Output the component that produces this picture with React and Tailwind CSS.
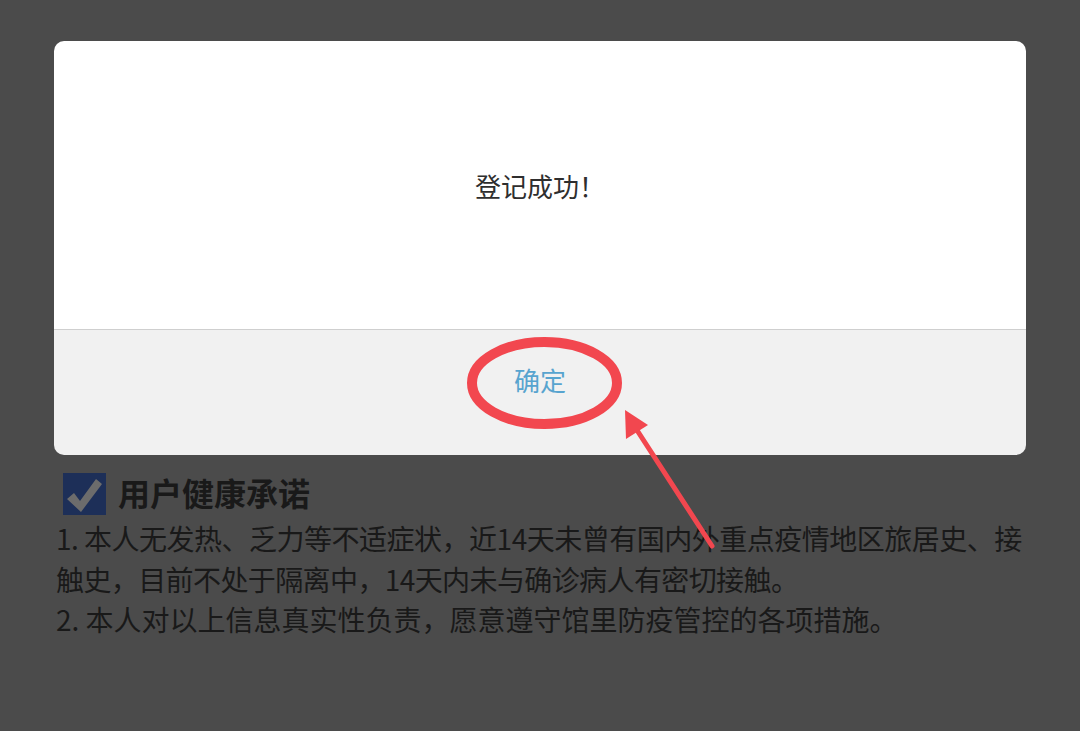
import React from 'react';

const CJK = { fontFamily: '"Noto Sans CJK SC", "Noto Sans", sans-serif' };

function CheckIcon() {
  return (
    <div className="w-[43px] h-[42px] bg-[#1d2f58] flex items-center justify-center">
      <svg viewBox="0 0 43 42" className="w-[43px] h-[42px]">
        <path d="M4 26 L11 20 L17 28 L33 6 L39 11 L18 39 Z" fill="#6c6c6c" />
      </svg>
    </div>
  );
}

export default function App() {
  return (
    <div className="relative w-[1080px] h-[731px] overflow-hidden bg-[#4b4b4b]" style={CJK}>
      {/* page content behind the dim layer */}
      <div className="pt-[473px] pl-[56px] text-[#191919]">
        <div className="flex items-center gap-[12px] pl-[7px]">
          <CheckIcon />
          <h2 className="text-[32px] font-bold leading-none -mt-[4px]">用户健康承诺</h2>
        </div>
        <div className="mt-[3px] text-[28px] leading-[40.5px] whitespace-nowrap">
          <div className="tracking-[-0.5px]">1. 本人无发热、乏力等不适症状，近14天未曾有国内外重点疫情地区旅居史、接</div>
          <div className="tracking-[-0.6px]">触史，目前不处于隔离中，14天内未与确诊病人有密切接触。</div>
          <div>2. 本人对以上信息真实性负责，愿意遵守馆里防疫管控的各项措施。</div>
        </div>
      </div>

      {/* dialog */}
      <div className="absolute left-[54px] top-[41px] w-[972px] rounded-[10px] overflow-hidden">
        <div className="h-[288px] bg-white flex items-center justify-center">
          <p className="text-[26px] text-[#2e2e2e]">登记成功！</p>
        </div>
        <div className="h-[1px] bg-[#cfcfcf]"></div>
        <div className="h-[125px] bg-[#f1f1f1] flex justify-center pt-[35px]">
          <button className="text-[26px] leading-[30px] h-[30px] text-[#58a4cf]">确定</button>
        </div>
      </div>

      {/* red annotation */}
      <svg className="absolute inset-0 pointer-events-none" width="1080" height="731" viewBox="0 0 1080 731">
        <ellipse cx="544.5" cy="383" rx="72.5" ry="41" fill="none" stroke="#f2474f" strokeWidth="10" />
        <line x1="712" y1="546" x2="633" y2="424" stroke="#f2474f" strokeWidth="5" strokeLinecap="round" />
        <polygon points="625,410 648,425 626,439" fill="#f2474f" />
      </svg>
    </div>
  );
}
